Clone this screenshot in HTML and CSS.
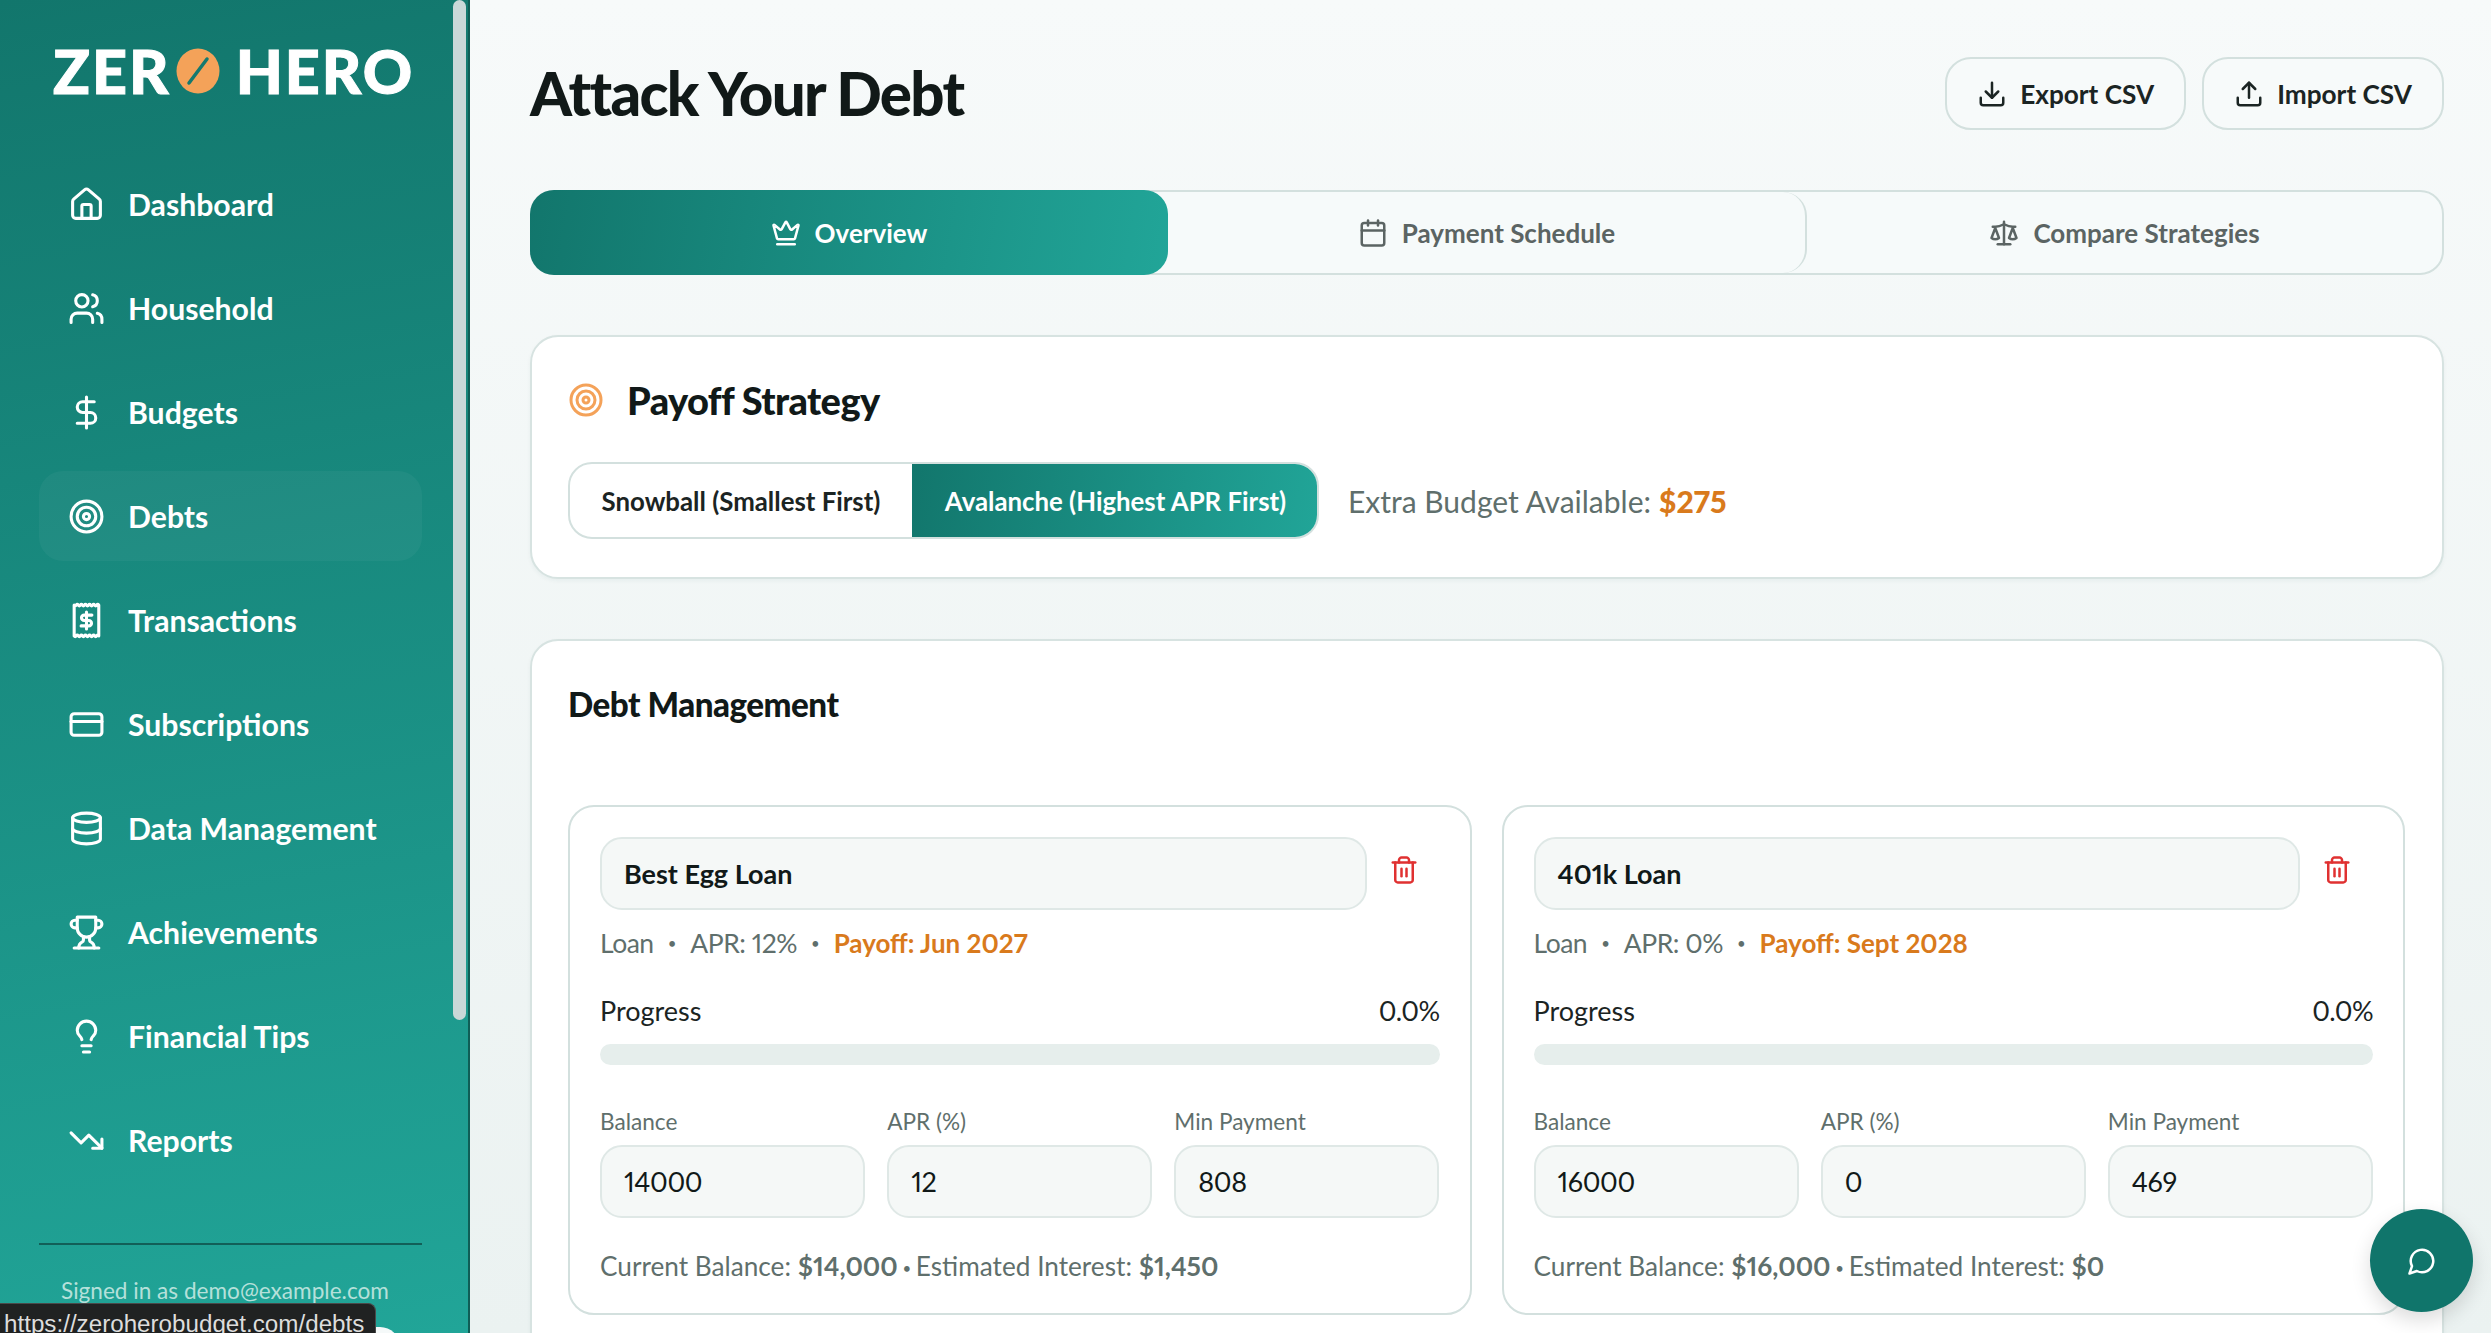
FILE: index.html
```html
<!doctype html>
<html>
<head>
    <meta charset="utf-8">
    <title>Attack Your Debt</title>
    <link rel="stylesheet" href="styles.css">
</head>
<body>
<div class="app">
    <aside class="side">
        <div class="logo">ZER<span class="logo-o"><svg viewBox="0 0 44 46"><ellipse cx="22" cy="23" rx="21.500" ry="22.500" fill="#f4a259"/><path d="M13 35 31 11" stroke="#14796f" stroke-width="3.500"/></svg></span><span class="logo-hero">HERO</span></div>
        <nav class="nav">
            <a class="nav-item"><svg class="ico" viewBox="0 0 24 24"><path d="M15 21v-8a1 1 0 0 0-1-1h-4a1 1 0 0 0-1 1v8"/><path d="M3 10a2 2 0 0 1 .7-1.5l7-6a2 2 0 0 1 2.6 0l7 6a2 2 0 0 1 .7 1.5v9a2 2 0 0 1-2 2H5a2 2 0 0 1-2-2z"/></svg>Dashboard</a>
            <a class="nav-item"><svg class="ico" viewBox="0 0 24 24"><path d="M16 21v-2a4 4 0 0 0-4-4H6a4 4 0 0 0-4 4v2"/><circle cx="9" cy="7" r="4"/><path d="M22 21v-2a4 4 0 0 0-3-3.87"/><path d="M16 3.13a4 4 0 0 1 0 7.75"/></svg>Household</a>
            <a class="nav-item"><svg class="ico" viewBox="0 0 24 24"><path d="M12 2v20"/><path d="M17 5H9.5a3.5 3.5 0 0 0 0 7h5a3.5 3.5 0 0 1 0 7H6"/></svg>Budgets</a>
            <a class="nav-item active"><svg class="ico" viewBox="0 0 24 24"><circle cx="12" cy="12" r="10"/><circle cx="12" cy="12" r="6"/><circle cx="12" cy="12" r="2"/></svg>Debts</a>
            <a class="nav-item"><svg class="ico" viewBox="0 0 24 24"><path d="M4 2q.67 1 1.330 0t1.330 0 1.330 0 1.330 0 1.330 0 1.330 0 1.330 0 1.330 0 1.330 0 1.330 0 1.330 0 1.330 0V22q-.67-1-1.330 0t-1.330 0-1.330 0-1.330 0-1.330 0-1.330 0-1.330 0-1.330 0-1.330 0-1.330 0-1.330 0-1.330 0Z"/><path d="M15.500 8.500h-5a1.750 1.750 0 0 0 0 3.500h3a1.750 1.750 0 0 1 0 3.500h-5"/><path d="M12 6.500v11"/></svg>Transactions</a>
            <a class="nav-item"><svg class="ico" viewBox="0 0 24 24"><rect x="2" y="5" width="20" height="14" rx="2"/><path d="M2 10h20"/></svg>Subscriptions</a>
            <a class="nav-item"><svg class="ico" viewBox="0 0 24 24"><ellipse cx="12" cy="5" rx="9" ry="3"/><path d="M3 5v14a9 3 0 0 0 18 0V5"/><path d="M3 12a9 3 0 0 0 18 0"/></svg>Data Management</a>
            <a class="nav-item"><svg class="ico" viewBox="0 0 24 24"><path d="M6 9H4.500a2.500 2.500 0 0 1 0-5H6"/><path d="M18 9h1.500a2.500 2.500 0 0 0 0-5H18"/><path d="M4 22h16"/><path d="M10 14.660V17c0 .55-.47.98-.97 1.210C7.850 18.750 7 20.240 7 22"/><path d="M14 14.660V17c0 .55.47.98.97 1.210C16.150 18.750 17 20.240 17 22"/><path d="M18 2H6v7a6 6 0 0 0 12 0V2Z"/></svg>Achievements</a>
            <a class="nav-item"><svg class="ico" viewBox="0 0 24 24"><path d="M15 14c.2-1 .7-1.700 1.500-2.500 1-.9 1.500-2.200 1.500-3.500A6 6 0 0 0 6 8c0 1 .2 2.200 1.500 3.500.7.7 1.300 1.500 1.500 2.500"/><path d="M9 18h6"/><path d="M10 22h4"/></svg>Financial Tips</a>
            <a class="nav-item"><svg class="ico" viewBox="0 0 24 24"><path d="m22 17-8.500-8.500-5 5L2 7"/><path d="M16 17h6v-6"/></svg>Reports</a>
        </nav>
        <div class="side-foot">
            <div class="signed">Signed in as demo@example.com</div>
            <div class="foot-btn"></div>
        </div>
        <div class="side-scroll"></div>
    </aside>

    <main class="main">
        <header class="head">
            <h1>Attack Your Debt</h1>
            <div class="head-btns">
                <a class="btn"><svg class="ico-sm" viewBox="0 0 24 24"><path d="M12 15V3"/><path d="M21 15v4a2 2 0 0 1-2 2H5a2 2 0 0 1-2-2v-4"/><path d="m7 10 5 5 5-5"/></svg>Export CSV</a>
                <a class="btn"><svg class="ico-sm" viewBox="0 0 24 24"><path d="M12 3v12"/><path d="m17 8-5-5-5 5"/><path d="M21 15v4a2 2 0 0 1-2 2H5a2 2 0 0 1-2-2v-4"/></svg>Import CSV</a>
            </div>
        </header>

        <div class="tabs">
            <a class="tab on"><svg class="ico-sm" viewBox="0 0 24 24"><path d="M11.600 3.300a.5.500 0 0 1 .9 0l2.900 5.600a1 1 0 0 0 1.500.3l4.300-3.700a.5.500 0 0 1 .8.500l-2.800 10.300a1 1 0 0 1-1 .7H5.800a1 1 0 0 1-1-.7L2 6a.5.500 0 0 1 .8-.5l4.300 3.700a1 1 0 0 0 1.500-.3z"/><path d="M5 21h14"/></svg>Overview</a>
            <a class="tab"><svg class="ico-sm" viewBox="0 0 24 24"><path d="M8 2v4"/><path d="M16 2v4"/><rect x="3" y="4" width="18" height="18" rx="2"/><path d="M3 10h18"/></svg>Payment Schedule</a>
            <a class="tab"><svg class="ico-sm" viewBox="0 0 24 24"><path d="m16 16 3-8 3 8c-.87.650-1.920 1-3 1s-2.130-.350-3-1Z"/><path d="m2 16 3-8 3 8c-.87.650-1.920 1-3 1s-2.130-.350-3-1Z"/><path d="M7 21h10"/><path d="M12 3v18"/><path d="M3 7h2c2 0 5-1 7-2 2 1 5 2 7 2h2"/></svg>Compare Strategies</a>
        </div>

        <section class="card strategy">
            <h2 class="strategy-title"><svg class="target" viewBox="0 0 24 24"><circle cx="12" cy="12" r="10"/><circle cx="12" cy="12" r="6"/><circle cx="12" cy="12" r="2"/></svg>Payoff Strategy</h2>
            <div class="strategy-row">
                <div class="seg">
                    <a class="seg-btn">Snowball (Smallest First)</a>
                    <a class="seg-btn on">Avalanche (Highest APR First)</a>
                </div>
                <div class="extra">Extra Budget Available: <b>$275</b></div>
            </div>
        </section>

        <section class="card manage">
            <h3>Debt Management</h3>
            <div class="debts">
                <div class="debt">
                    <div class="debt-top">
                        <div class="field name">Best Egg Loan</div>
                        <svg class="trash" viewBox="0 0 24 24"><path d="M3 6h18"/><path d="M19 6v14c0 1-1 2-2 2H7c-1 0-2-1-2-2V6"/><path d="M8 6V4c0-1 1-2 2-2h4c1 0 2 1 2 2v2"/><path d="M10 11v6"/><path d="M14 11v6"/></svg>
                    </div>
                    <div class="meta"><span>Loan</span><i>•</i><span>APR: 12%</span><i>•</i><b>Payoff: Jun 2027</b></div>
                    <div class="prog-row"><span>Progress</span><span class="pct">0.0%</span></div>
                    <div class="bar"></div>
                    <div class="inputs">
                        <label>Balance<div class="field">14000</div></label>
                        <label>APR (%)<div class="field">12</div></label>
                        <label>Min Payment<div class="field">808</div></label>
                    </div>
                    <div class="sum">Current Balance: <b>$14,000</b> <i>•</i> Estimated Interest: <b>$1,450</b></div>
                </div>
                <div class="debt">
                    <div class="debt-top">
                        <div class="field name">401k Loan</div>
                        <svg class="trash" viewBox="0 0 24 24"><path d="M3 6h18"/><path d="M19 6v14c0 1-1 2-2 2H7c-1 0-2-1-2-2V6"/><path d="M8 6V4c0-1 1-2 2-2h4c1 0 2 1 2 2v2"/><path d="M10 11v6"/><path d="M14 11v6"/></svg>
                    </div>
                    <div class="meta"><span>Loan</span><i>•</i><span>APR: 0%</span><i>•</i><b>Payoff: Sept 2028</b></div>
                    <div class="prog-row"><span>Progress</span><span class="pct">0.0%</span></div>
                    <div class="bar"></div>
                    <div class="inputs">
                        <label>Balance<div class="field">16000</div></label>
                        <label>APR (%)<div class="field">0</div></label>
                        <label>Min Payment<div class="field">469</div></label>
                    </div>
                    <div class="sum">Current Balance: <b>$16,000</b> <i>•</i> Estimated Interest: <b>$0</b></div>
                </div>
            </div>
        </section>
    </main>
</div>

<a class="chat"><svg viewBox="0 0 24 24"><path d="M7.900 20A9 9 0 1 0 4 16.100L2 22Z"/></svg></a>
<div class="status">https://zeroherobudget.com/debts</div>
</body>
</html>
```

FILE: styles.css
```css
*{margin: 0; padding: 0; box-sizing: border-box;}
html,body{width: 100%; height: 100%; overflow: hidden;}
body{font-family: "Lato", "Noto Sans", sans-serif; font-variant-numeric: proportional-nums; color: #111918; background: #f2f7f6;}
svg{fill: none; stroke: currentColor; stroke-linecap: round; stroke-linejoin: round; flex: none;}

.app{display: flex; height: 1333px; overflow: hidden;}

/* sidebar */
.side{position: relative; width: 470px; flex: none; height: 1333px; overflow: hidden; padding: 45px 46px 0 39px; color: #fff; background: linear-gradient(170deg, #12766c 0%, #21a598 100%); border-right: 2px solid #0f5e56; display: flex; flex-direction: column;}
.logo{height: 52px; margin: 0 0 0 14px; font-size: 61px; line-height: 52px; font-weight: 900; letter-spacing: 2px; -webkit-text-stroke: 1px #fff; white-space: nowrap; display: flex; align-items: center;}
.logo-o{display: inline-flex; width: 44px; height: 46px; margin: 0 0 0 5px;}
.logo-o svg{width: 44px; height: 46px; stroke: none;}
.logo-hero{margin-left: 16px;}
.nav{display: flex; flex-direction: column; gap: 14px; margin-top: 62px;}
.nav-item{display: flex; align-items: center; gap: 23px; height: 90px; padding: 0 29px; border-radius: 24px; font-size: 30.2px; font-weight: 700;}
.nav-item.active{background: rgba(255,255,255,.04);}
.ico{width: 37px; height: 37px; stroke-width: 2;}
.side-foot{margin-top: 58px; border-top: 2px solid #125f58; padding-top: 32px;}
.signed{font-size: 22.6px; color: #b5e0da; padding-left: 22px; line-height: 28px; white-space: nowrap;}
.foot-btn{position: absolute; left: 340px; top: 1327px; width: 60px; height: 40px; border-radius: 20px; background: #f5f9f9;}
.side-scroll{position: absolute; left: 453px; top: 0; width: 13px; height: 1020px; border-radius: 7px; background: #c9d8d8;}

/* main */
.main{flex: 1; min-width: 0; padding: 57px 47px 0 60px; background: linear-gradient(180deg, #f7fafa 0%, #ebf2f1 100%);}
.head{display: flex; justify-content: space-between; align-items: center; height: 73px;}
h1{margin-top: -2px; font-size: 60px; font-weight: 900; letter-spacing: -1.7px; color: #111918;}
.head-btns{display: flex; gap: 16px;}
.btn{display: flex; align-items: center; gap: 13px; height: 73px; padding: 0 30px; border: 2px solid #d3e0de; border-radius: 26px; font-size: 26.2px; font-weight: 700; background: #f7fafa; color: #1b2423;}
.ico-sm{width: 30px; height: 30px; stroke-width: 2;}

.tabs{display: grid; grid-template-columns: 636px 639px 1fr; height: 85px; margin-top: 60px; border: 2px solid #d3e0de; border-radius: 24px; background: #f6fafa;}
.tab{display: flex; align-items: center; justify-content: center; gap: 14px; font-size: 26px; font-weight: 700; color: #5b6463; border-right: 2px solid #d3e0de; border-radius: 0 24px 24px 0;}
.tab:last-child{border-right: 0;}
.tab.on{margin: -2px 0 -2px -2px; border: 0; border-radius: 24px; color: #fff; background: linear-gradient(100deg, #12766c 0%, #21a598 100%);}

.card{background: #fff; border: 2px solid #d7e3e1; border-radius: 28px; box-shadow: 0 2px 4px rgba(20,80,70,.05);}
.strategy{height: 244px; margin-top: 60px; padding: 38px 37px 38px 36px;}
.strategy-title{display: flex; align-items: center; gap: 23px; height: 50px; font-size: 38px; font-weight: 900; letter-spacing: -.6px;}
.target{width: 36px; height: 36px; stroke: #f4a259; stroke-width: 2;}
.strategy-row{display: flex; align-items: center; gap: 29px; margin-top: 37px;}
.seg{display: grid; grid-template-columns: 342px 405px; height: 77px; border: 2px solid #d3e0de; border-radius: 24px; overflow: hidden; background: #fff;}
.seg-btn{display: flex; align-items: center; justify-content: center; font-size: 25.8px; font-weight: 700; color: #1b2423; white-space: nowrap;}
.seg-btn.on{margin: -2px -2px -2px 0; color: #fff; background: linear-gradient(100deg, #12766c 0%, #21a598 100%);}
.extra{font-size: 30px; color: #5f6f6c;}
.extra b{font-weight: 900; color: #d97a1c;}

.manage{height: 800px; margin-top: 60px; padding: 43px 37px 0 36px;}
h3{font-size: 33.2px; line-height: 40px; font-weight: 900; letter-spacing: -.5px;}
.debts{display: grid; grid-template-columns: 1fr 1fr; gap: 30px; margin-top: 81px;}
.debt{height: 510px; padding: 30px 30px 0; border: 2px solid #d3e0de; border-radius: 26px;}
.debt-top{display: flex; align-items: center;}
.field{display: flex; align-items: center; height: 73px; padding: 0 22px; background: #f5f8f7; border: 2px solid #dfe8e6; border-radius: 22px; font-size: 27px; color: #111918;}
.name{flex: 1; font-weight: 700;}
.trash{width: 30px; height: 30px; margin: -8px 21px 0 22px; stroke: #e03131; stroke-width: 2;}
.meta{display: flex; gap: 14px; align-items: center; height: 34px; margin-top: 16px; font-size: 26.5px; color: #5f6f6c;}
.meta span{letter-spacing: -.5px;}
.meta i, .sum i{font-style: normal; font-size: 15px; vertical-align: 2px;}
.sum i{margin: 0 -2px;}
.meta b{font-size: 26px; font-weight: 700; color: #d97a1c;}
.prog-row{display: flex; justify-content: space-between; margin-top: 34px; height: 34px; font-size: 27px; color: #1b2423;}
.pct{letter-spacing: -.6px;}
.bar{height: 21px; margin-top: 16px; border-radius: 11px; background: #e6eeec;}
.inputs{display: grid; grid-template-columns: repeat(3, 1fr); gap: 22px; margin-top: 43px;}
.inputs label{display: block; font-size: 22.6px; line-height: 28px; color: #5f6f6c;}
.inputs .field{margin-top: 9px; letter-spacing: -.4px; font-size: 27px;}
.sum{margin-top: 31px; font-size: 26.2px; line-height: 34px; color: #5f6f6c; white-space: nowrap;}
.sum b{font-weight: 700;}

.chat{position: absolute; left: 2370px; top: 1209px; width: 103px; height: 103px; border-radius: 50%; background: #10756b; display: flex; align-items: center; justify-content: center; box-shadow: 0 8px 20px rgba(0,0,0,.14);}
.chat svg{width: 30px; height: 30px; stroke: #fff; stroke-width: 2;}
.status{position: absolute; left: 0; top: 1303px; width: 376px; height: 30px; padding: 6px 0 0 4px; background: #202222; border: 1px solid #4a4a4a; border-left: 0; border-bottom: 0; border-radius: 0 8px 0 0; color: #ddd; font-family: "Liberation Sans", sans-serif; font-size: 24.2px; line-height: 28px; white-space: nowrap; overflow: hidden;}
```
